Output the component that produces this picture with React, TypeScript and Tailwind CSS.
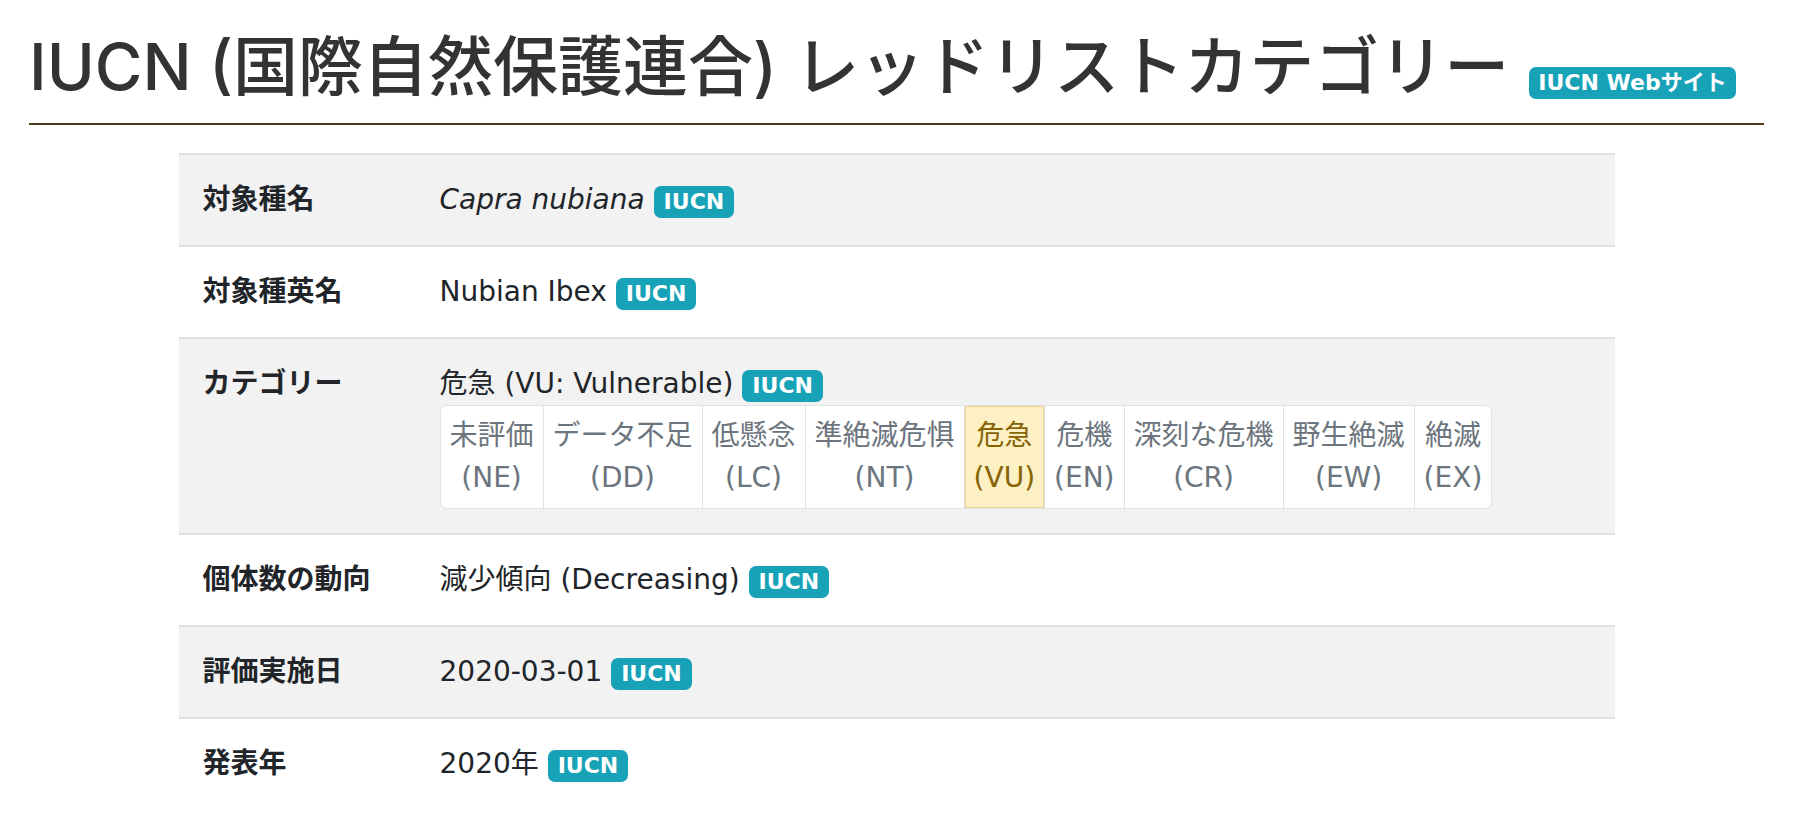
import React, { ReactNode } from "react";

// Red list category rows
const categories = [
  { ja: "未評価", code: "(NE)" },
  { ja: "データ不足", code: "(DD)" },
  { ja: "低懸念", code: "(LC)" },
  { ja: "準絶滅危惧", code: "(NT)" },
  { ja: "危急", code: "(VU)", active: true },
  { ja: "危機", code: "(EN)" },
  { ja: "深刻な危機", code: "(CR)" },
  { ja: "野生絶滅", code: "(EW)" },
  { ja: "絶滅", code: "(EX)" },
];

const Badge: React.FC<{ children: ReactNode; className?: string }> = ({
  children,
  className = "",
}) => (
  <span
    className={`inline-block rounded-[7px] bg-[#17a2b8] pt-[5px] pb-[5px] text-[22px] font-bold leading-none text-white ${className}`}
  >
    {children}
  </span>
);

const Row: React.FC<{ label: string; striped?: boolean; children: ReactNode }> = ({
  label,
  striped,
  children,
}) => (
  <div
    className={`flex border-t-2 border-[#dee2e6] ${striped ? "bg-[#f2f2f2]" : "bg-white"}`}
  >
    <div className="w-[237px] shrink-0 p-6 font-bold">{label}</div>
    <div className="flex-1 p-6">{children}</div>
  </div>
);

const CategoryStrip = () => (
  <div className="inline-flex overflow-hidden rounded-[7px] border border-[#dee2e6] bg-white">
    {categories.map((c, i) => (
      <div
        key={c.code}
        className={`px-[9px] py-[9px] text-center ${i > 0 ? "border-l border-[#dee2e6]" : ""} ${
          c.active
            ? "bg-[#fdf0c4] text-[#856404] ring-1 ring-inset ring-[#ecd48c]"
            : "text-[#6c757d]"
        }`}
      >
        <div>{c.ja}</div>
        <div>{c.code}</div>
      </div>
    ))}
  </div>
);

export default function App() {
  return (
    <div className="min-h-[825px] bg-white font-['DejaVu_Sans','Noto_Sans_CJK_JP',sans-serif] text-[#212529]">
      <div className="mx-[29px]">
        {/* Title */}
        <div className="flex items-baseline border-b-2 border-[#513a22] pt-[28px] pb-[18px]">
          <h1 className="font-['Inter','Noto_Sans_CJK_JP',sans-serif] text-[65px] font-medium leading-[77px] text-[#333333]">
            IUCN (国際自然保護連合) レッドリストカテゴリー
          </h1>
          <Badge className="ml-[20px] px-[9px]">IUCN Webサイト</Badge>
        </div>

        {/* Table */}
        <div className="mx-auto mt-[28px] w-[1436px] text-[28px] leading-[42px]">
          <Row label="対象種名" striped>
            <i>Capra nubiana</i> <Badge className="px-[10px]">IUCN</Badge>
          </Row>
          <Row label="対象種英名">
            Nubian Ibex <Badge className="px-[10px]">IUCN</Badge>
          </Row>
          <Row label="カテゴリー" striped>
            <div>
              危急 (VU: Vulnerable) <Badge className="px-[10px]">IUCN</Badge>
            </div>
            <CategoryStrip />
          </Row>
          <Row label="個体数の動向">
            減少傾向 (Decreasing) <Badge className="px-[10px]">IUCN</Badge>
          </Row>
          <Row label="評価実施日" striped>
            2020-03-01 <Badge className="px-[10px]">IUCN</Badge>
          </Row>
          <Row label="発表年">
            2020年 <Badge className="px-[10px]">IUCN</Badge>
          </Row>
        </div>
      </div>
    </div>
  );
}
